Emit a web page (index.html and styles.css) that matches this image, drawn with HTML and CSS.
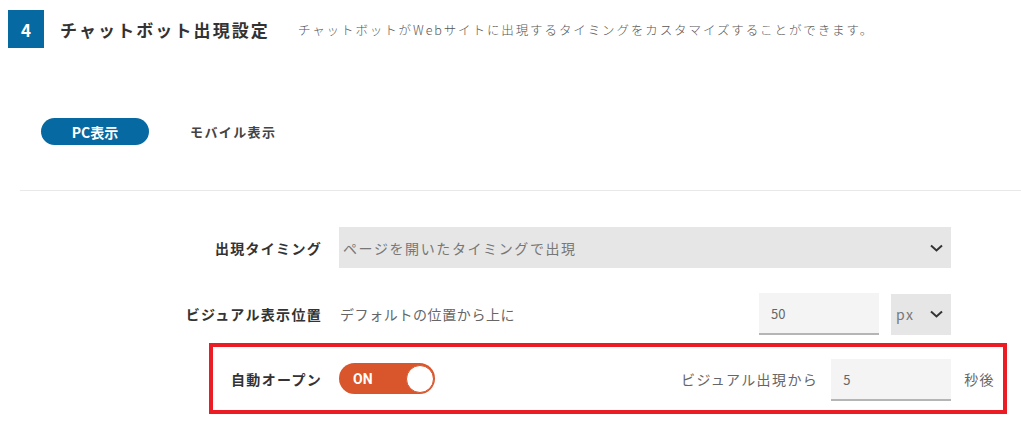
FILE: index.html
```html
<!DOCTYPE html>
<html lang="ja">
<head>
<meta charset="utf-8">
<link rel="stylesheet" href="styles.css">
</head>
<body>
<div class="header">
  <div class="badge">4</div>
  <h1 class="title">チャットボット出現設定</h1>
  <p class="desc">チャットボットがWebサイトに出現するタイミングをカスタマイズすることができます。</p>
</div>
<div class="tabs">
  <div class="tab active">PC表示</div>
  <div class="tab">モバイル表示</div>
</div>
<div class="divider"></div>
<div class="form">
  <div class="row">
    <div class="label">出現タイミング</div>
    <div class="field">
      <div class="select wide">
        <span class="select-text">ページを開いたタイミングで出現</span>
        <svg class="chev" width="13" height="8" viewBox="0 0 13 8"><path d="M1 1.5 L6.5 6.5 L12 1.5" fill="none" stroke="#333" stroke-width="2"/></svg>
      </div>
    </div>
  </div>
  <div class="row row2">
    <div class="label">ビジュアル表示位置</div>
    <div class="field">
      <span class="plain">デフォルトの位置から上に</span>
      <div class="input num">50</div>
      <div class="select unit">
        <span class="select-text">px</span>
        <svg class="chev" width="13" height="8" viewBox="0 0 13 8"><path d="M1 1.5 L6.5 6.5 L12 1.5" fill="none" stroke="#333" stroke-width="2"/></svg>
      </div>
    </div>
  </div>
</div>
<div class="auto-row">
  <div class="label auto-label">自動オープン</div>
  <div class="toggle"><span class="toggle-text">ON</span><span class="knob"></span></div>
  <div class="right">
    <span class="plain">ビジュアル出現から</span>
    <div class="input sec">5</div>
    <span class="plain">秒後</span>
  </div>
</div>
</body>
</html>
```
FILE: styles.css
```css
* { box-sizing: border-box; }
body {
  margin: 0;
  font-family: "Noto Sans CJK JP", "Noto Sans", sans-serif;
  background: #fff;
  color: #333;
  width: 1021px;
  height: 427px;
  overflow: hidden;
}
.header {
  display: flex;
  align-items: center;
  padding: 10px 0 0 8px;
}
.badge {
  width: 36px;
  height: 38px;
  background: #0669a2;
  color: #fff;
  font-weight: 700;
  font-size: 17px;
  display: flex;
  align-items: center;
  justify-content: center;
}
.title {
  margin: 0 0 0 16px;
  font-size: 17px;
  font-weight: 700;
  letter-spacing: 2.1px;
  color: #333;
}
.desc {
  margin: 0 0 0 28px;
  font-size: 12.5px;
  font-weight: 300;
  color: #555;
  letter-spacing: 1.9px;
}
.tabs {
  display: flex;
  align-items: center;
  margin: 70px 0 0 41px;
}
.tab {
  font-size: 13px;
  font-weight: 700;
  color: #444;
  letter-spacing: 1.4px;
}
.tab.active {
  width: 108px;
  height: 27px;
  border-radius: 14px;
  background: #0669a2;
  color: #fff;
  font-size: 14px;
  display: flex;
  align-items: center;
  justify-content: center;
  letter-spacing: 0;
  margin-right: 41px;
}
.divider {
  margin: 45px 0 0 20px;
  height: 1px;
  background: #e8e8e8;
}
.form {
  margin: 36px 0 0 170px;
}
.row {
  display: flex;
  align-items: center;
  gap: 17px;
}
.row2 { margin-top: 25px; }
.label {
  width: 152px;
  text-align: right;
  font-size: 14px;
  font-weight: 700;
  letter-spacing: 1.3px;
  color: #333;
}
.field {
  width: 612px;
  display: flex;
  align-items: center;
}
.select {
  height: 41px;
  background: #e6e6e6;
  display: flex;
  align-items: center;
  justify-content: space-between;
  padding: 0 8px 0 4px;
}
.select.wide { width: 612px; }
.select.unit { width: 60px; height: 41px; margin-left: 12px; padding-left: 5px; }
.select-text {
  font-size: 14px;
  color: #777;
  letter-spacing: 1.6px;
}
.plain {
  font-size: 14px;
  color: #666;
  letter-spacing: 0.6px;
  margin-left: 1px;
}
.input {
  background: #f4f4f4;
  border-bottom: 2px solid #b5b5b5;
  height: 42px;
  width: 120px;
  display: flex;
  align-items: center;
  padding-left: 12px;
  font-size: 13px;
  color: #666;
}
.input.num { margin-left: auto; }
.auto-row {
  margin: 8px 0 0 209px;
  width: 798px;
  height: 71px;
  border: 4px solid #ec1c24;
  display: flex;
  align-items: center;
  padding-right: 8px;
}
.auto-label {
  width: 109px;
  margin-right: 17px;
}
.toggle {
  width: 96px;
  height: 31px;
  border-radius: 16px;
  background: #d9552b;
  display: flex;
  align-items: center;
  justify-content: space-between;
  padding: 0 1px 0 14px;
}
.toggle-text {
  color: #fff;
  font-weight: 700;
  font-size: 14px;
  font-family: Roboto, "Noto Sans", sans-serif;
}
.knob {
  width: 28px;
  height: 28px;
  border-radius: 50%;
  background: #fff;
  border: 1px solid #d9552b;
}
.right {
  margin-left: auto;
  display: flex;
  align-items: center;
}
.right .plain { letter-spacing: 1.4px; }
.input.sec { margin: 3px 12px 0 13px; height: 42px; padding-left: 12px; }
```
